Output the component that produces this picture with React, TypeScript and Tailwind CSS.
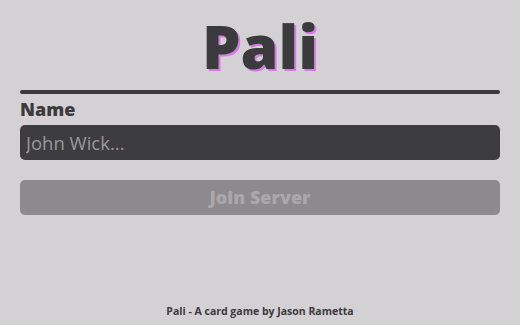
import React from "react"

export default function App() {
  return (
    <div
      className="flex h-[325px] w-[520px] flex-col bg-[#d3d1d4] px-5 text-[#3b3a3c]"
      style={{ fontFamily: '"Open Sans", "Noto Sans", sans-serif' }}
    >
      <h1 className="mt-[6px] text-center text-[61px] font-extrabold leading-[80px] [text-shadow:2px_2px_0_#d67de3]">
        Pali
      </h1>
      <div className="mt-[4px] h-[4px] w-full rounded-sm bg-[#3b3a3c]" />
      <label className="mt-[3px] text-[18px] font-extrabold leading-[24px]">Name</label>
      <input
        type="text"
        placeholder="John Wick..."
        className="mt-[4px] h-[35px] w-full rounded-[5px] bg-[#3d3c3e] px-[6px] text-[18.5px] text-[#e5e5e5] outline-none placeholder:text-[#9b999c]"
      />
      <button className="mt-[20px] h-[35px] w-full rounded-[5px] bg-[#8c8a8d] text-[18px] font-extrabold text-[#aaa8ab]">
        Join Server
      </button>
      <footer className="mt-auto pb-[5px] text-center text-[10.5px] font-bold">
        Pali - A card game by Jason Rametta
      </footer>
    </div>
  )
}
